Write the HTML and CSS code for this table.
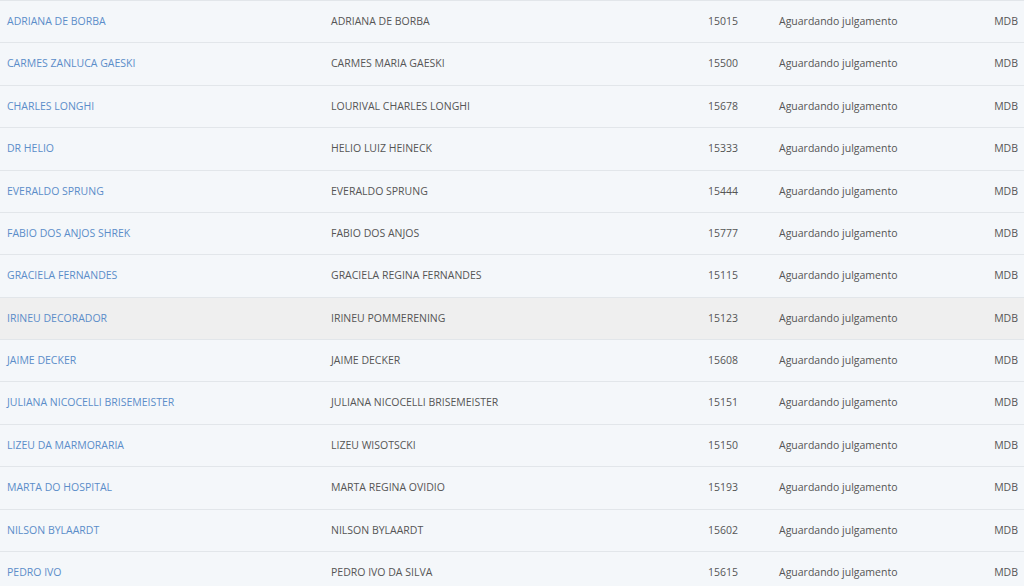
FILE: index.html
```html
<!DOCTYPE html>
<html lang="pt">
<head>
<meta charset="utf-8">
<title>Candidatos</title>
<link rel="stylesheet" href="styles.css">
</head>
<body>
<table class="list">
<colgroup>
<col class="c1"><col class="c2"><col class="c3"><col class="c4"><col class="c5">
</colgroup>
<tbody>
<tr><td><a href="#">ADRIANA DE BORBA</a></td><td>ADRIANA DE BORBA</td><td>15015</td><td>Aguardando julgamento</td><td class="r">MDB</td></tr>
<tr><td><a href="#">CARMES ZANLUCA GAESKI</a></td><td>CARMES MARIA GAESKI</td><td>15500</td><td>Aguardando julgamento</td><td class="r">MDB</td></tr>
<tr><td><a href="#">CHARLES LONGHI</a></td><td>LOURIVAL CHARLES LONGHI</td><td>15678</td><td>Aguardando julgamento</td><td class="r">MDB</td></tr>
<tr><td><a href="#">DR HELIO</a></td><td>HELIO LUIZ HEINECK</td><td>15333</td><td>Aguardando julgamento</td><td class="r">MDB</td></tr>
<tr><td><a href="#">EVERALDO SPRUNG</a></td><td>EVERALDO SPRUNG</td><td>15444</td><td>Aguardando julgamento</td><td class="r">MDB</td></tr>
<tr><td><a href="#">FABIO DOS ANJOS SHREK</a></td><td>FABIO DOS ANJOS</td><td>15777</td><td>Aguardando julgamento</td><td class="r">MDB</td></tr>
<tr><td><a href="#">GRACIELA FERNANDES</a></td><td>GRACIELA REGINA FERNANDES</td><td>15115</td><td>Aguardando julgamento</td><td class="r">MDB</td></tr>
<tr class="hover"><td><a href="#">IRINEU DECORADOR</a></td><td>IRINEU POMMERENING</td><td>15123</td><td>Aguardando julgamento</td><td class="r">MDB</td></tr>
<tr><td><a href="#">JAIME DECKER</a></td><td>JAIME DECKER</td><td>15608</td><td>Aguardando julgamento</td><td class="r">MDB</td></tr>
<tr><td><a href="#">JULIANA NICOCELLI BRISEMEISTER</a></td><td>JULIANA NICOCELLI BRISEMEISTER</td><td>15151</td><td>Aguardando julgamento</td><td class="r">MDB</td></tr>
<tr><td><a href="#">LIZEU DA MARMORARIA</a></td><td>LIZEU WISOTSCKI</td><td>15150</td><td>Aguardando julgamento</td><td class="r">MDB</td></tr>
<tr><td><a href="#">MARTA DO HOSPITAL</a></td><td>MARTA REGINA OVIDIO</td><td>15193</td><td>Aguardando julgamento</td><td class="r">MDB</td></tr>
<tr><td><a href="#">NILSON BYLAARDT</a></td><td>NILSON BYLAARDT</td><td>15602</td><td>Aguardando julgamento</td><td class="r">MDB</td></tr>
<tr><td><a href="#">PEDRO IVO</a></td><td>PEDRO IVO DA SILVA</td><td>15615</td><td>Aguardando julgamento</td><td class="r">MDB</td></tr>
</tbody>
</table>
</body>
</html>
```

FILE: styles.css
```css
html, body {
  margin: 0;
  padding: 0;
  background: #f4f7fa;
}
body {
  font-family: "Open Sans", "Liberation Sans", sans-serif;
  font-size: 10.5px;
  color: #555;
  overflow: hidden;
}
.list {
  width: 1024px;
  border-collapse: collapse;
  table-layout: fixed;
}
.c1 { width: 324px; }
.c2 { width: 377px; }
.c3 { width: 71px; }
.c4 { width: auto; }
.c5 { width: 80px; }
.list td {
  border-top: 1px solid #e2e6ea;
  padding: 13px 0 13px 7px;
  line-height: 15.38px;
  white-space: nowrap;
  vertical-align: middle;
}
.list td.r {
  text-align: right;
  padding-right: 6px;
}
.list tr.hover td {
  background: #efefef;
}
.list a {
  color: #5b8dc9;
  text-decoration: none;
}
```
